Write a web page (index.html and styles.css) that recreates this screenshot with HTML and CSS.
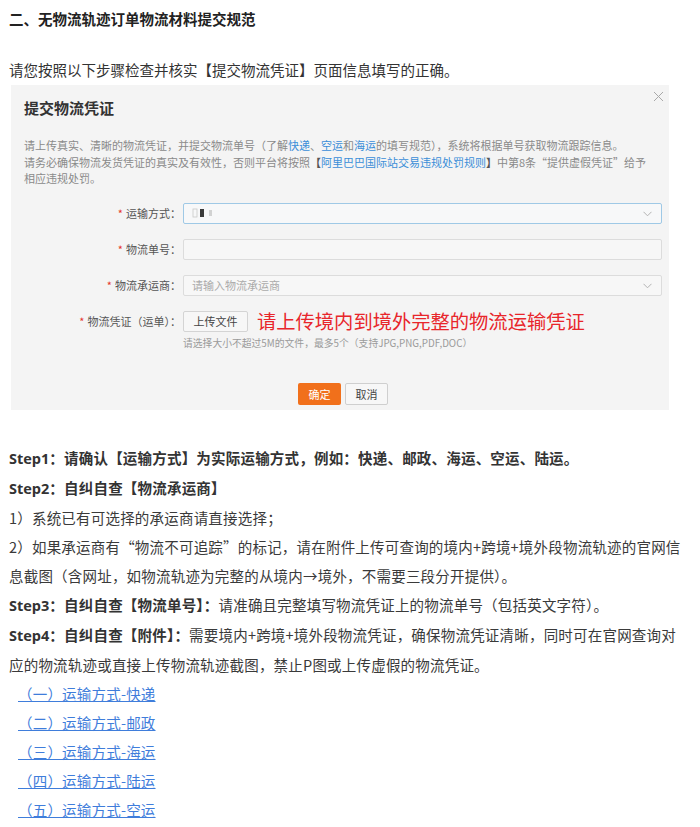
FILE: index.html
```html
<!DOCTYPE html>
<html lang="zh-CN">
<head>
<meta charset="utf-8">
<title>无物流轨迹订单物流材料提交规范</title>
<link rel="stylesheet" href="styles.css">
</head>
<body>
<div class="page">
  <h2 class="title">二、无物流轨迹订单物流材料提交规范</h2>
  <p class="intro">请您按照以下步骤检查并核实【提交物流凭证】页面信息填写的正确。</p>

  <div class="shot">
    <svg class="close" width="11" height="11" viewBox="0 0 11 11"><path d="M1 1L10 10M10 1L1 10" stroke="#a9a9a9" stroke-width="1" fill="none"/></svg>
    <div class="shot-title">提交物流凭证</div>
    <div class="shot-desc">请上传真实、清晰的物流凭证，并提交物流单号（了解<span class="lk">快递</span>、<span class="lk">空运</span>和<span class="lk">海运</span>的填写规范），系统将根据单号获取物流跟踪信息。<br>请务必确保物流发货凭证的真实及有效性，否则平台将按照<span class="dk">【</span><span class="lk">阿里巴巴国际站交易违规处罚规则</span><span class="dk">】</span>中第8条“提供虚假凭证”给予相应违规处罚。</div>

    <div class="form">
      <div class="lbl"><span class="req">*</span>运输方式：</div>
      <div class="field select focus">
        <svg class="garble" width="28" height="10" viewBox="0 0 28 10"><rect x="1" y="1" width="4" height="8" fill="none" stroke="#c9c9c9" stroke-width="0.8"/><rect x="8" y="1" width="4" height="8" fill="#3a3a3a"/><path d="M17 3h3M17 5h3M17 7h3" stroke="#9a9a9a" stroke-width="0.8"/></svg>
        <svg class="chev" width="9" height="6" viewBox="0 0 9 6"><path d="M0.5 0.8L4.5 4.8L8.5 0.8" stroke="#b3b3b3" stroke-width="1" fill="none"/></svg>
      </div>

      <div class="lbl"><span class="req">*</span>物流单号：</div>
      <div class="field"></div>

      <div class="lbl"><span class="req">*</span>物流承运商：</div>
      <div class="field select"><span class="ph">请输入物流承运商</span>
        <svg class="chev" width="9" height="6" viewBox="0 0 9 6"><path d="M0.5 0.8L4.5 4.8L8.5 0.8" stroke="#b3b3b3" stroke-width="1" fill="none"/></svg>
      </div>

      <div class="lbl"><span class="req">*</span>物流凭证（运单）：</div>
      <div class="upload-row">
        <span class="btn-upload">上传文件</span>
        <span class="red-note">请上传境内到境外完整的物流运输凭证</span>
      </div>

      <div></div>
      <div class="help">请选择大小不超过5M的文件，最多5个（支持JPG,PNG,PDF,DOC）</div>
    </div>

    <div class="actions">
      <span class="btn btn-ok">确定</span>
      <span class="btn btn-cancel">取消</span>
    </div>
  </div>

  <div class="steps">
    <p class="strong"><span class="en">Step1</span>：请确认【运输方式】为实际运输方式，例如：快递、邮政、海运、空运、陆运。</p>
    <p class="strong"><span class="en">Step2</span>：自纠自查【物流承运商】</p>
    <p>1）系统已有可选择的承运商请直接选择；</p>
    <p>2）如果承运商有“物流不可追踪”的标记，请在附件上传可查询的境内+跨境+境外段物流轨迹的官网信息截图（含网址，如物流轨迹为完整的从境内→境外，不需要三段分开提供）。</p>
    <p><b class="en">Step3</b><b>：自纠自查【物流单号】：</b>请准确且完整填写物流凭证上的物流单号（包括英文字符）。</p>
    <p><b class="en">Step4</b><b>：自纠自查【附件】：</b>需要境内+跨境+境外段物流凭证，确保物流凭证清晰，同时可在官网查询对应的物流轨迹或直接上传物流轨迹截图，禁止P图或上传虚假的物流凭证。</p>
    <ul class="links">
      <li><a href="#">（一）运输方式-快递</a></li>
      <li><a href="#">（二）运输方式-邮政</a></li>
      <li><a href="#">（三）运输方式-海运</a></li>
      <li><a href="#">（四）运输方式-陆运</a></li>
      <li><a href="#">（五）运输方式-空运</a></li>
    </ul>
  </div>
</div>
</body>
</html>
```

FILE: styles.css
```css
* { box-sizing: border-box; }
html, body { margin: 0; padding: 0; background: #fff; }
body {
  font-family: "Noto Sans CJK SC", "Noto Sans", sans-serif;
  font-size: 14.5px;
  line-height: 29px;
  color: #333;
}
.page { padding: 4px 9px 0 9px; }
.title {
  margin: 0;
  font-size: 14.5px;
  line-height: 29px;
  font-weight: 700;
  color: #222;
}
.intro { margin: 22px 0 0 0; }

/* screenshot of dialog */
.shot {
  position: relative;
  margin: 1px 0 0 2px;
  width: 658px;
  height: 325px;
  background: #f4f4f4;
  padding: 13px 7px 0 13px;
  line-height: normal;
}
.close { position: absolute; top: 6px; right: 5px; }
.shot-title {
  font-size: 15px;
  line-height: 20px;
  font-weight: 700;
  color: #333;
}
.shot-desc {
  margin-top: 19px;
  font-size: 11px;
  line-height: 16.5px;
  color: #8a8a8a;
  width: 632px;
}
.shot-desc .lk { color: #3b8ed8; }
.shot-desc .dk { color: #555; font-weight: 700; }

.form {
  margin-top: 16px;
  display: grid;
  grid-template-columns: 157px 479px;
  column-gap: 2px;
  row-gap: 15px;
  font-size: 11px;
}
.lbl {
  height: 21px;
  line-height: 21px;
  text-align: right;
  color: #555;
  white-space: nowrap;
}
.req { color: #e5342c; margin-right: 3px; }
.field {
  position: relative;
  height: 21px;
  border: 1px solid #dcdcdc;
  border-radius: 2px;
  background: #f7f7f7;
  display: flex;
  align-items: center;
  padding-left: 8px;
}
.field.focus { border-color: #9fc9e6; background: #f7f8f9; }
.ph { color: #aaa; font-size: 11px; }
.garble { display: block; }
.chev { position: absolute; right: 9px; top: 7px; }

.upload-row {
  height: 21px;
  display: flex;
  align-items: center;
}
.btn-upload {
  height: 21px;
  width: 65px;
  border: 1px solid #d4d4d4;
  border-radius: 2px;
  background: #f7f7f7;
  color: #444;
  font-size: 11px;
  display: flex;
  align-items: center;
  justify-content: center;
}
.red-note {
  margin-left: 9px;
  color: #e8262b;
  font-size: 19.3px;
  line-height: 21px;
  white-space: nowrap;
}
.help {
  margin-top: -11px;
  font-size: 9.8px;
  line-height: 14px;
  color: #9a9a9a;
}

.actions {
  margin-top: 33px;
  display: flex;
  justify-content: center;
  gap: 4px;
}
.btn {
  width: 43px;
  height: 22px;
  border-radius: 2px;
  font-size: 11px;
  display: flex;
  align-items: center;
  justify-content: center;
}
.btn-ok { background: #f1701b; color: #fff; }
.btn-cancel { background: #f7f7f7; border: 1px solid #cfcfcf; color: #444; }

/* steps */
.steps { margin-top: 33px; width: 677px; letter-spacing: 0.2px; color: #3a3a3a; }
.steps p { margin: 0; }
.strong { font-weight: 700; color: #333; }
.steps b { color: #333; }
.en { font-family: "Open Sans", "Noto Sans", sans-serif; font-weight: 700; letter-spacing: 0; }
.links { list-style: none; margin: 0; padding: 0 0 0 9px; }
.links a { color: #3f7ddb; text-decoration: underline; }
```
